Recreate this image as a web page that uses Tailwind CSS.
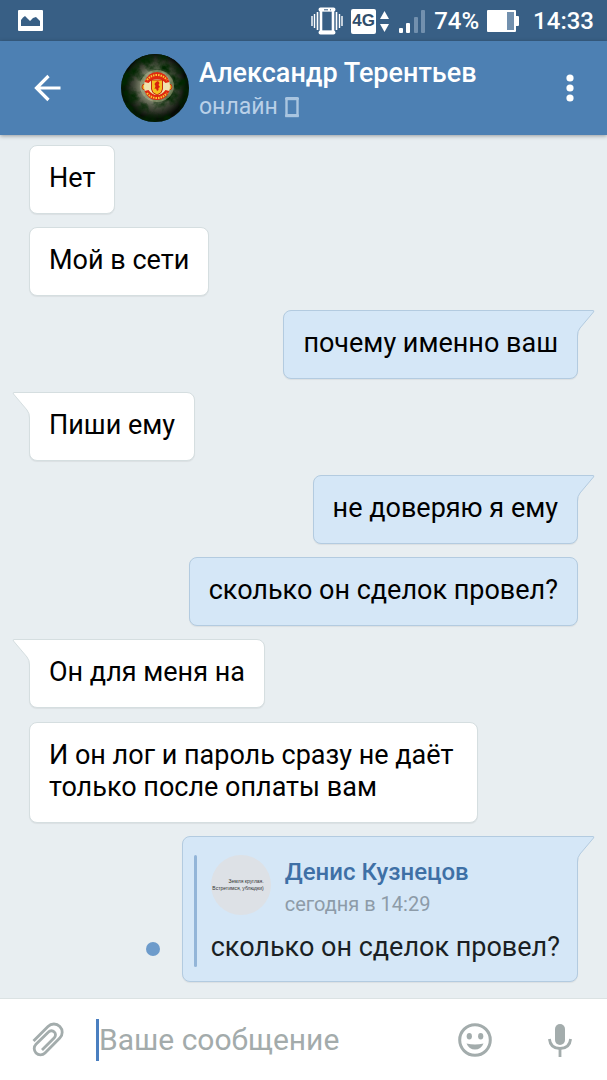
<!DOCTYPE html>
<html lang="ru">
<head>
    <meta charset="UTF-8">
    <meta name="viewport" content="width=device-width, initial-scale=1.0">
    <title>Александр Терентьев</title>
    <script src="https://cdn.jsdelivr.net/npm/@tailwindcss/browser@4"></script>
</head>
<body class="flex min-h-screen flex-col bg-[#e8eef1] font-['Roboto',sans-serif] text-black">

    <!-- Status bar -->
    <div class="flex h-[41px] items-center justify-between bg-[#385f85] pl-[18px] pr-[13px] text-white">
        <svg class="h-[21px] w-[25px]" viewBox="0 0 25 21">
            <rect width="25" height="21" rx="1" fill="#fff"/>
            <path d="M3 16V10L5 7.500l2-1.500 3 3 2 2 3-3 3-1 4 4v5z" fill="#385f85"/>
        </svg>
        <div class="flex items-center pt-px">
            <svg class="h-7 w-8" viewBox="0 0 32 28" fill="none" stroke="#fff">
                <rect x="10" y="3" width="12" height="22" stroke-width="2.600"/>
                <path d="M9.500 2.500h13M9.500 25.500h13" stroke-width="4" stroke-linecap="round"/>
                <path d="M13 2.800h4M19 2.800h1" stroke="#385f85"/>
                <path d="M6.500 5v18M25.500 5v18" stroke-width="1.600"/>
                <path d="M3.500 7v14M28.500 7v14" stroke-width="1.400"/>
                <path d="M1 9v10M31 9v10" stroke-width="1.400"/>
            </svg>
            <span class="ml-2 flex h-[25px] w-[25px] items-center justify-center rounded-[2px] bg-white font-['Liberation_Sans',sans-serif] text-[17px] font-bold text-[#2f4d6b]">4G</span>
            <svg class="ml-1 h-[21px] w-[9px]" viewBox="0 0 9 21" fill="#fff">
                <path d="M4.500 0L9 8H0zM4.500 21L9 13H0z"/>
            </svg>
            <svg class="ml-[9px] h-[26px] w-7" viewBox="0 0 28 26">
                <rect x="1" y="20" width="4" height="5" rx="1" fill="#fff"/>
                <rect x="8" y="15" width="4" height="10" rx="1" fill="#fff"/>
                <rect x="16" y="9" width="4" height="16" rx="1" fill="#7290ae"/>
                <rect x="23" y="2" width="4" height="23" rx="1" fill="#7290ae"/>
            </svg>
            <span class="ml-2 text-2xl leading-8 font-medium">74%</span>
            <svg class="ml-2 h-[22px] w-8" viewBox="0 0 32 22">
                <path d="M1 0h27a1 1 0 0 1 1 1v5h2a1 1 0 0 1 1 1v8a1 1 0 0 1-1 1h-2v5a1 1 0 0 1-1 1H1a1 1 0 0 1-1-1V1a1 1 0 0 1 1-1z" fill="#fff"/>
                <rect x="20" y="2" width="7" height="18" fill="#7290ae"/>
            </svg>
            <span class="ml-[14px] text-2xl leading-8 font-medium">14:33</span>
        </div>
    </div>

    <!-- Chat header -->
    <header class="flex h-[94px] items-center bg-[#4d80b3] pl-[33px] pr-[26px] text-white shadow-[0_1px_4px_rgba(0,0,0,0.35)]">
        <button type="button" aria-label="Назад" class="shrink-0">
            <svg class="h-7 w-7" viewBox="0 0 28 28" fill="none" stroke="#fff" stroke-width="3.200">
                <path d="M27.500 14H4M15.500 2L3.500 14l12 12"/>
            </svg>
        </button>
        <svg class="ml-[60px] h-[68px] w-[68px] shrink-0 rounded-full" viewBox="0 0 68 68">
            <defs>
                <radialGradient id="glow" cx="0.5" cy="0.5" r="0.5">
                    <stop offset="0" stop-color="#d5d8b0"/>
                    <stop offset="0.400" stop-color="#8c9078"/>
                    <stop offset="0.650" stop-color="#4a5040"/>
                    <stop offset="1" stop-color="#070a06"/>
                </radialGradient>
                <filter id="smoke" x="0" y="0" width="1" height="1">
                    <feTurbulence type="fractalNoise" baseFrequency="0.080" numOctaves="4" seed="7"/>
                    <feColorMatrix values="0 0 0 0 0  0 0 0 0 0.020  0 0 0 0 0  2.600 0 0 0 -0.950"/>
                </filter>
            </defs>
            <rect width="68" height="68" fill="#070a06"/>
            <ellipse cx="34" cy="32" rx="31" ry="33" fill="url(#glow)"/>
            <rect width="68" height="68" filter="url(#smoke)"/>
            <ellipse cx="36" cy="32" rx="17" ry="16" fill="#b9bc90" opacity="0.500"/>
            <circle cx="24" cy="33" r="3" fill="#eab52b" stroke="#c93a14"/>
            <circle cx="48" cy="33" r="3" fill="#eab52b" stroke="#c93a14"/>
            <circle cx="36" cy="32" r="13" fill="#efe3ae"/>
            <path d="M23.500 28Q27 18 36 18t12.500 10l-4 1Q41 25 36 25t-8.500 4zM23.500 37Q27 46 36 46t12.500-9l-4-1Q41 41 36 41t-8.500-5z" fill="#e0280f"/>
            <path d="M26 26Q30 21 36 21t10 5M26 39Q30 44 36 44t10-5" fill="none" stroke="#f7c934" stroke-width="2" stroke-dasharray="1.500 1"/>
            <path d="M30.500 26h11v9q0 4-5.500 6-5.500-2-5.500-6z" fill="#f4c11e" stroke="#c62a10"/>
            <path d="M35 28l2-1 1.500 2-1 2 1.500 2-1.500 1v2l-1.500 1-1-2.500-1.500.5 1-3-1-2z" fill="#d8220d"/>
        </svg>
        <div class="ml-[10px] min-w-0 flex-1 pt-1">
            <h1 class="truncate text-[27px] leading-8 font-medium">Александр Терентьев</h1>
            <p class="flex items-center gap-[7px] pt-[2px] text-[23px] leading-8 text-[#b9d0e8]">
                онлайн
                <svg class="h-[21px] w-[14px]" viewBox="0 0 14 21" fill="none" stroke="#a9c5e0">
                    <rect x="1.500" y="2" width="11" height="17" stroke-width="2.400"/>
                    <path d="M1.500 1.500h11M1.500 18.500h11" stroke-width="3" stroke-linecap="round"/>
                </svg>
            </p>
        </div>
        <button type="button" aria-label="Меню" class="shrink-0 px-[7px]">
            <svg class="h-7 w-2" viewBox="0 0 8 28" fill="#fff">
                <circle cx="4" cy="4" r="3.600"/>
                <circle cx="4" cy="14" r="3.600"/>
                <circle cx="4" cy="24" r="3.600"/>
            </svg>
        </button>
    </header>

    <!-- Messages -->
    <main class="flex flex-1 flex-col justify-between pt-[10px] pr-[29px] pb-4 pl-[29px] text-[27px] leading-8">
        <div class="self-start rounded-lg border border-[#d5dee0] bg-white px-[19px] pt-4 pb-[19px] shadow-[0_1px_1px_rgba(0,0,0,0.06)]">Нет</div>
        <div class="self-start rounded-lg border border-[#d5dee0] bg-white px-[19px] pt-4 pb-[19px] shadow-[0_1px_1px_rgba(0,0,0,0.06)]">Мой в сети</div>

        <div class="relative self-end rounded-lg rounded-tr-none border border-[#b3cbe0] bg-[#d5e7f7] px-[19px] pt-4 pb-[19px] shadow-[0_1px_1px_rgba(0,0,0,0.06)]">
            почему именно ваш
            <svg class="absolute -top-px -right-[18px] h-[26px] w-5" viewBox="0 0 20 26">
                <path d="M0 .5h18q1.500 0 .5 1.500L5 18q-2.500 3-2.500 8H0z" fill="#d5e7f7"/>
                <path d="M0 .5h18q1.500 0 .5 1.500L5 18q-2.500 3-2.500 8" fill="none" stroke="#b3cbe0"/>
            </svg>
        </div>

        <div class="relative self-start rounded-lg rounded-tl-none border border-[#d5dee0] bg-white px-[19px] pt-4 pb-[19px] shadow-[0_1px_1px_rgba(0,0,0,0.06)]">
            Пиши ему
            <svg class="absolute -top-px -left-[18px] h-[26px] w-5" viewBox="0 0 20 26">
                <path d="M20 .5H2Q.5.500 1.500 2L15 18q2.500 3 2.500 8H20z" fill="#fff"/>
                <path d="M20 .5H2Q.5.500 1.500 2L15 18q2.500 3 2.500 8" fill="none" stroke="#d5dee0"/>
            </svg>
        </div>

        <div class="relative self-end rounded-lg rounded-tr-none border border-[#b3cbe0] bg-[#d5e7f7] px-[19px] pt-4 pb-[19px] shadow-[0_1px_1px_rgba(0,0,0,0.06)]">
            не доверяю я ему
            <svg class="absolute -top-px -right-[18px] h-[26px] w-5" viewBox="0 0 20 26">
                <path d="M0 .5h18q1.500 0 .5 1.500L5 18q-2.500 3-2.500 8H0z" fill="#d5e7f7"/>
                <path d="M0 .5h18q1.500 0 .5 1.500L5 18q-2.500 3-2.500 8" fill="none" stroke="#b3cbe0"/>
            </svg>
        </div>
        <div class="self-end rounded-lg border border-[#b3cbe0] bg-[#d5e7f7] px-[19px] pt-4 pb-[19px] shadow-[0_1px_1px_rgba(0,0,0,0.06)]">сколько он сделок провел?</div>

        <div class="relative self-start rounded-lg rounded-tl-none border border-[#d5dee0] bg-white px-[19px] pt-4 pb-[19px] shadow-[0_1px_1px_rgba(0,0,0,0.06)]">
            Он для меня на
            <svg class="absolute -top-px -left-[18px] h-[26px] w-5" viewBox="0 0 20 26">
                <path d="M20 .5H2Q.5.500 1.500 2L15 18q2.500 3 2.500 8H20z" fill="#fff"/>
                <path d="M20 .5H2Q.5.500 1.500 2L15 18q2.500 3 2.500 8" fill="none" stroke="#d5dee0"/>
            </svg>
        </div>
        <div class="self-start rounded-lg border border-[#d5dee0] bg-white pt-4 pr-6 pb-[19px] pl-[19px] shadow-[0_1px_1px_rgba(0,0,0,0.06)]">
            И он лог и пароль сразу не даёт<br>только после оплаты вам
        </div>

        <!-- Forwarded message, not read yet -->
        <div class="flex items-end gap-[22px] self-end">
            <span class="mb-[26px] h-[14px] w-[14px] rounded-full bg-[#6d9bcb]"></span>
            <div class="relative rounded-lg rounded-tr-none border border-[#b3cbe0] bg-[#d5e7f7] pt-[18px] pr-[17px] pb-[14px] pl-[11px] shadow-[0_1px_1px_rgba(0,0,0,0.06)]">
                <div class="flex gap-[14px]">
                    <span class="w-[3px] rounded-full bg-[#93b5d8]"></span>
                    <div>
                        <div class="flex items-start gap-[14px]">
                            <div class="flex h-[60px] w-[60px] flex-col justify-center rounded-full bg-[#dde1e6] pr-[7px] text-right font-['Liberation_Sans',sans-serif] text-[5px] leading-[7px] whitespace-nowrap text-[#333]">
                                <span>Земля круглая.</span>
                                <span>Встретимся, ублюдки)</span>
                            </div>
                            <div class="pt-px">
                                <div class="text-2xl leading-8 font-medium text-[#3e70a6]">Денис Кузнецов</div>
                                <div class="text-xl leading-8 text-[#8d9ba8]">сегодня в 14:29</div>
                            </div>
                        </div>
                        <div class="pt-[11px] pb-1 text-[#1a1f24]">сколько он сделок провел?</div>
                    </div>
                </div>
                <svg class="absolute -top-px -right-[18px] h-[26px] w-5" viewBox="0 0 20 26">
                    <path d="M0 .5h18q1.500 0 .5 1.500L5 18q-2.500 3-2.500 8H0z" fill="#d5e7f7"/>
                    <path d="M0 .5h18q1.500 0 .5 1.500L5 18q-2.500 3-2.500 8" fill="none" stroke="#b3cbe0"/>
                </svg>
            </div>
        </div>
    </main>

    <!-- Composer -->
    <form class="flex h-[82px] items-center border-t border-[#dbe2e3] bg-white pr-[35px] pl-8">
        <button type="button" aria-label="Прикрепить" class="shrink-0">
            <svg class="h-9 w-8" viewBox="0 0 32 36" fill="none" stroke="#a3acac" stroke-width="2.800">
                <path d="M1.500 19L16 4.500a8.200 8.200 0 0 1 11.800 0 8.200 8.200 0 0 1 0 11.600L13 31a6.300 6.300 0 0 1-9 0 6.300 6.300 0 0 1 0-8.800L16.500 10a4 4 0 0 1 5.800 0 4 4 0 0 1 0 5.700L10 28"/>
            </svg>
        </button>
        <input type="text" aria-label="Сообщение" placeholder="Ваше сообщение" class="ml-8 h-[42px] min-w-0 flex-1 border-l-[3px] border-[#4a7fc0] text-[30px] outline-none placeholder:text-[#a3abab]">
        <button type="button" aria-label="Смайлы" class="ml-4 shrink-0">
            <svg class="h-[34px] w-[34px]" viewBox="0 0 34 34" fill="#a3acac">
                <circle cx="17" cy="17" r="15.300" fill="none" stroke="#a3acac" stroke-width="3"/>
                <ellipse cx="11.300" cy="13.300" rx="2.600" ry="3.200"/>
                <ellipse cx="22.700" cy="13.300" rx="2.600" ry="3.200"/>
                <path d="M8.500 20.500q8.500 2 17 0-2.500 6-8.500 6t-8.500-6z"/>
            </svg>
        </button>
        <button type="button" aria-label="Голосовое сообщение" class="ml-14 shrink-0">
            <svg class="h-[34px] w-6" viewBox="0 0 24 34" fill="none" stroke="#a3acac" stroke-width="2.800">
                <rect x="7" y="1" width="10" height="21" rx="5" fill="#a3acac" stroke="none"/>
                <path d="M1.400 16q1 9.500 10.600 9.500T22.600 16M12 25v9"/>
            </svg>
        </button>
    </form>
</body>
</html>
